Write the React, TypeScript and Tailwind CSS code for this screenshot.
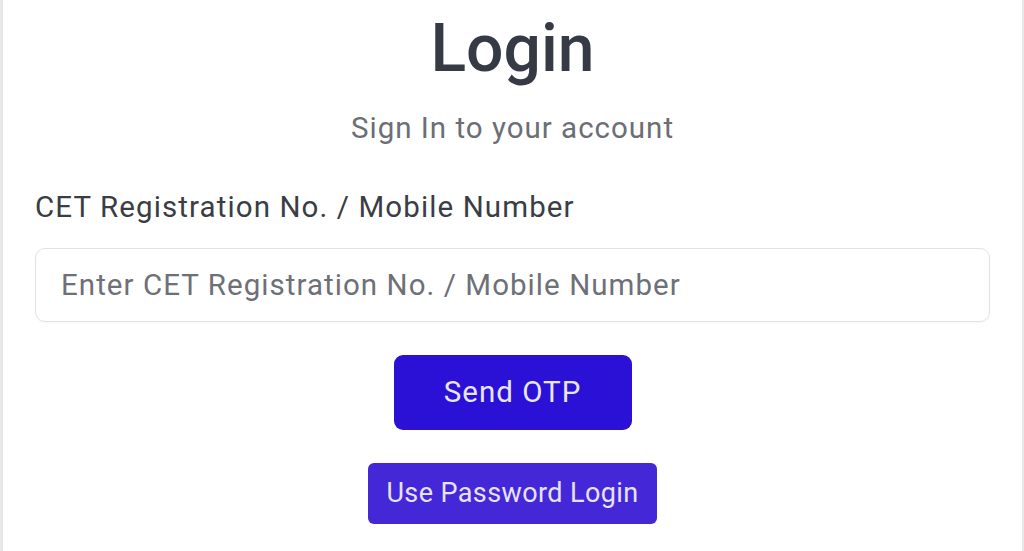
import React from "react";

const App = () => {
  return (
    <div
      className="w-full h-[551px] bg-white border-l-[3px] border-r-2 border-[#e8e8e8] flex flex-col items-center px-[32px] pt-[9px]"
      style={{ fontFamily: "Roboto, 'Noto Sans', sans-serif" }}
    >
      <h1 className="text-[66px] leading-[80px] font-medium text-[#353a45]">Login</h1>
      <p className="mt-[21px] text-[29.5px] leading-[36px] tracking-[1px] text-[#6b6e75]">
        Sign In to your account
      </p>

      <div className="w-full mt-[43px]">
        <label className="block text-[29.5px] leading-[36px] tracking-[1.1px] text-[#3a3d44]">
          CET Registration No. / Mobile Number
        </label>
        <input
          type="text"
          placeholder="Enter CET Registration No. / Mobile Number"
          className="mt-[23px] w-full h-[74px] rounded-[10px] border border-[#e2e2e2] px-[25px] pb-[1px] text-[29.5px] tracking-[1.05px] text-[#374151] placeholder:text-[#6e7078] outline-none shadow-[0_1px_2px_rgba(0,0,0,0.04)]"
        />
      </div>

      <button className="mt-[33px] w-[238px] h-[75px] rounded-[9px] bg-[#2b10d6] text-[#e8e6ff] text-[29.5px] tracking-[1px] leading-none">
        Send OTP
      </button>

      <button className="mt-[33px] w-[289px] h-[61px] rounded-[6px] bg-[#4427d6] text-[#e6e3ff] text-[27px] tracking-[0.4px] leading-none">
        Use Password Login
      </button>
    </div>
  );
};

export default App;
